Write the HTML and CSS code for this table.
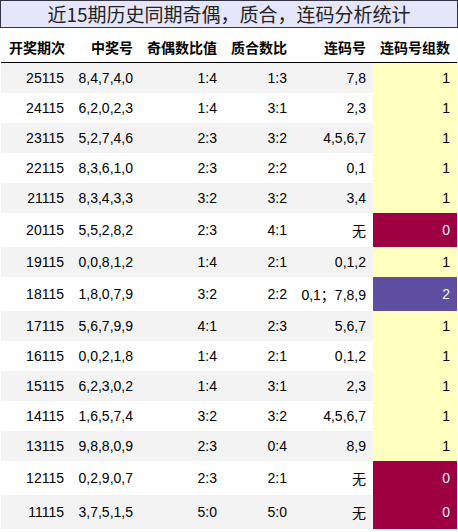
FILE: index.html
```html
<!DOCTYPE html>
<html lang="zh">
<head>
<meta charset="utf-8">
<title>近15期历史同期奇偶，质合，连码分析统计</title>
<link rel="stylesheet" href="styles.css">
</head>
<body>
<div class="title">近15期历史同期奇偶，质合，连码分析统计</div>
<table class="stats">
  <colgroup>
    <col class="c1"><col class="c2"><col class="c3"><col class="c4"><col class="c5"><col class="c6">
  </colgroup>
  <thead>
    <tr><th>开奖期次</th><th>中奖号</th><th>奇偶数比值</th><th>质合数比</th><th>连码号</th><th>连码号组数</th></tr>
  </thead>
  <tbody>
    <tr><td>25115</td><td>8,4,7,4,0</td><td>1:4</td><td>1:3</td><td>7,8</td><td class="g1">1</td></tr>
    <tr><td>24115</td><td>6,2,0,2,3</td><td>1:4</td><td>3:1</td><td>2,3</td><td class="g1">1</td></tr>
    <tr><td>23115</td><td>5,2,7,4,6</td><td>2:3</td><td>3:2</td><td>4,5,6,7</td><td class="g1">1</td></tr>
    <tr><td>22115</td><td>8,3,6,1,0</td><td>2:3</td><td>2:2</td><td>0,1</td><td class="g1">1</td></tr>
    <tr><td>21115</td><td>8,3,4,3,3</td><td>3:2</td><td>3:2</td><td>3,4</td><td class="g1">1</td></tr>
    <tr><td>20115</td><td>5,5,2,8,2</td><td>2:3</td><td>4:1</td><td>无</td><td class="g0">0</td></tr>
    <tr><td>19115</td><td>0,0,8,1,2</td><td>1:4</td><td>2:1</td><td>0,1,2</td><td class="g1">1</td></tr>
    <tr><td>18115</td><td>1,8,0,7,9</td><td>3:2</td><td>2:2</td><td>0,1；7,8,9</td><td class="g2">2</td></tr>
    <tr><td>17115</td><td>5,6,7,9,9</td><td>4:1</td><td>2:3</td><td>5,6,7</td><td class="g1">1</td></tr>
    <tr><td>16115</td><td>0,0,2,1,8</td><td>1:4</td><td>2:1</td><td>0,1,2</td><td class="g1">1</td></tr>
    <tr><td>15115</td><td>6,2,3,0,2</td><td>1:4</td><td>3:1</td><td>2,3</td><td class="g1">1</td></tr>
    <tr><td>14115</td><td>1,6,5,7,4</td><td>3:2</td><td>3:2</td><td>4,5,6,7</td><td class="g1">1</td></tr>
    <tr><td>13115</td><td>9,8,8,0,9</td><td>2:3</td><td>0:4</td><td>8,9</td><td class="g1">1</td></tr>
    <tr><td>12115</td><td>0,2,9,0,7</td><td>2:3</td><td>2:1</td><td>无</td><td class="g0">0</td></tr>
    <tr><td>11115</td><td>3,7,5,1,5</td><td>5:0</td><td>5:0</td><td>无</td><td class="g0">0</td></tr>
  </tbody>
</table>
</body>
</html>
```
FILE: styles.css
```css
html, body {
  margin: 0;
  padding: 0;
  background: #ffffff;
}
body {
  width: 458px;
  font-family: "Liberation Sans", "Noto Sans CJK SC", sans-serif;
  color: #000;
}
.title {
  box-sizing: border-box;
  height: 28px;
  border: 1px solid #333344;
  background: #e6e6fa;
  color: #222;
  font-family: "Noto Sans CJK SC", sans-serif;
  font-size: 19px;
  line-height: 25px;
  text-align: center;
  white-space: nowrap;
}
.stats {
  margin-left: 1px;
  width: 456px;
  table-layout: fixed;
  border-collapse: collapse;
  font-size: 14px;
}
.c1 { width: 70px; }
.c2 { width: 69px; }
.c3 { width: 84px; }
.c4 { width: 70px; }
.c5 { width: 79px; }
.c6 { width: 84px; }
.stats th {
  font-family: "Noto Sans CJK SC", sans-serif;
  font-weight: bold;
  font-size: 14px;
  text-align: right;
  padding: 9px 7px 5px 0;
  border-bottom: 1px solid #000;
  white-space: nowrap;
}
.stats th:first-child {
  text-align: left;
  padding-left: 8px;
}
.stats td {
  text-align: right;
  padding: 7px 7px 7px 0;
  white-space: nowrap;
}
.stats tbody tr:nth-child(odd) td {
  background: #f3f3f3;
}
.stats tbody tr td.g1 { background: #ffffbf; color: #000; }
.stats tbody tr td.g0 { background: #9e0142; color: #f1f1f1; }
.stats tbody tr td.g2 { background: #5e4fa2; color: #f1f1f1; }
```
